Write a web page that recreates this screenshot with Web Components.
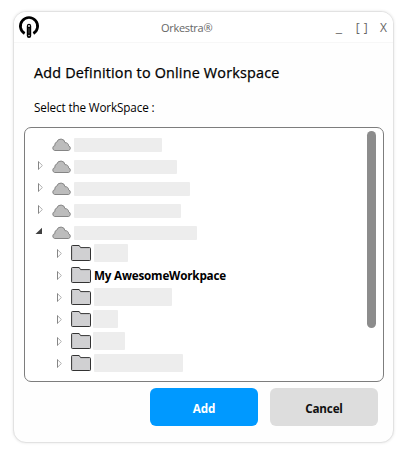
<!DOCTYPE html>
<html lang="en">
<head>
<meta charset="utf-8">
<title>Orkestra</title>
<style>
html,body{margin:0;background:#fff}
body{width:409px;height:456px;overflow:hidden;font-family:"Open Sans","Noto Sans",sans-serif;color:#000;font-size:12px}
</style>
</head>
<body>
<ork-window>
  <ork-titlebar slot="bar">Orkestra®</ork-titlebar>
  <ork-tree>
    <ork-row kind="cloud" arrow="none" bar="88"></ork-row>
    <ork-row kind="cloud" bar="103"></ork-row>
    <ork-row kind="cloud" bar="116"></ork-row>
    <ork-row kind="cloud" bar="107"></ork-row>
    <ork-row kind="cloud" arrow="open" bar="123"></ork-row>
    <ork-row kind="folder" bar="34"></ork-row>
    <ork-row kind="folder">My AwesomeWorkpace</ork-row>
    <ork-row kind="folder" bar="78"></ork-row>
    <ork-row kind="folder" bar="25" wide></ork-row>
    <ork-row kind="folder" bar="32" wide></ork-row>
    <ork-row kind="folder" bar="89"></ork-row>
  </ork-tree>
  <ork-button slot="actions" primary>Add</ork-button>
  <ork-button slot="actions">Cancel</ork-button>
</ork-window>
<script>
const define = (name, html) => customElements.define(name, class extends HTMLElement {
  constructor() {
    super();
    this.attachShadow({mode: 'open'}).innerHTML = html;
  }
});

define('ork-window', `<style>
:host{display:flow-root}
section{box-sizing:border-box;width:381px;height:432px;margin:11px 0 0 13px;border:1px solid #e2e2e2;border-radius:13px;box-shadow:0 0 3px #0000001c;background:#fefefe;display:flex;flex-direction:column;overflow:hidden}
h1{margin:20px 0 0 20px;font-size:14.4px;line-height:20px;font-weight:500;letter-spacing:.18px;white-space:nowrap;-webkit-text-stroke:.25px #000}
p{margin:16px 0 0 20px;font-size:11.7px;line-height:16px;letter-spacing:-.13px}
.list{margin:12px 0 0 10px}
footer{display:flex;gap:12px;margin:6px 0 0 136px}
</style>
<section><slot name="bar"></slot><h1>Add Definition to Online Workspace</h1><p>Select the WorkSpace :</p>
<div class="list"><slot></slot></div><footer><slot name="actions"></slot></footer></section>`);

define('ork-titlebar', `<style>
:host{display:block}
header{box-sizing:border-box;height:31px;border-bottom:1px solid #f7f7f7;background:#fff;display:grid;grid-template-columns:147px 1fr auto;color:#666;font-size:11px;line-height:32px}
svg{display:block;margin:3px 0 0 3px}
.title{letter-spacing:-.3px}
nav{display:flex;font-size:12px;margin-right:5px}
nav span{display:block;text-align:center;white-space:nowrap}
.min{width:10px;margin-right:8px;transform:scaleX(1.2)}.max{width:20px;margin-right:7px;letter-spacing:.5px}.close{width:9px}
</style>
<header><svg width="24" height="25" viewBox="0 0 24 25" fill="none"><path d="M7.6 18.5A8.6 8.6 0 1 1 16.4 18.5" stroke="#000" stroke-width="2.7"/><path d="M12 11V20.8" stroke="#000" stroke-width="4.4" stroke-linecap="round"/><path d="M12 13.2V18.5" stroke="#777" stroke-width=".7"/><circle cx="12" cy="11" r=".9" fill="#fff"/><circle cx="12" cy="20.5" r=".8" fill="#ccc"/></svg>
<span class="title"><slot></slot></span><nav><span class="min">_</span><span class="max">[ ]</span><span class="close">X</span></nav></header>`);

define('ork-tree', `<style>
:host{box-sizing:border-box;width:360px;height:255px;border:1px solid #7d7d7d;border-radius:7px;display:flex;justify-content:space-between;background:#fff}
.rows{padding-top:6px}
.thumb{width:9px;height:197px;margin:3px 7px 0 0;border-radius:5px;background:#8c8c8c}
</style>
<div class="rows"><slot></slot></div><div class="thumb"></div>`);

customElements.define('ork-row', class extends HTMLElement {
  constructor() {
    super();
    const folder = this.getAttribute('kind') === 'folder';
    const arrow = this.getAttribute('arrow') || 'closed';
    const bar = this.getAttribute('bar');
    const wide = this.hasAttribute('wide');
    const glyph = {
      none: '',
      closed: '<path d="M.5.7V8.3L4.4 4.5Z" fill="#fff" stroke="#b0b0b0"/><path d="M.5.5V8.5" stroke="#858585"/>',
      open: '<path d="M7 .7V7H.5Z" fill="#404040"/>'
    }[arrow];
    const icon = folder
      ? '<svg class="icon" width="20" height="18" viewBox="0 0 20 18"><path d="M.6 15.8V2.2Q.6 1.5 1.4 1.5H8.2L9.6 3.6H18.6Q19.5 3.6 19.5 4.5V15.8Q19.5 16.5 18.7 16.5H1.4Q.6 16.5.6 15.8Z" fill="#d0d0d2" stroke="#333"/></svg>'
      : '<svg class="icon" width="20" height="14" viewBox=".3 0 20 14"><path d="M3 12.5A2.5 2.5 0 0 1 3.2 7.6A2.9 2.9 0 0 1 5.1 4.1A4.2 4.2 0 0 1 13.3 4.7A3.1 3.1 0 0 1 16.9 7.9A2.4 2.4 0 0 1 16.9 12.5Z" fill="#bcbcbc" stroke="#858585"/></svg>';
    this.attachShadow({mode: 'open'}).innerHTML = `<style>
:host{display:flex;align-items:flex-start;height:22px;box-sizing:border-box}
.arrow{flex:none;width:8px;height:9px;margin:${folder ? '5px 6px 0 32px' : arrow === 'open' ? '5px 9px 0 10px' : '5px 6px 0 13px'}}
.icon{flex:none;margin-top:${folder ? 0 : 4}px}
.bar{width:${bar || 0}px;height:${folder ? 18 : 14}px;margin:${folder ? 0 : 4}px 0 0 ${folder ? (wide ? 2 : 3) : 2}px;background:#ededed;border-radius:1px}
b{font-weight:700;font-size:11.7px;line-height:18px;margin:0 0 0 3px;letter-spacing:-.2px;white-space:nowrap}
</style><svg class="arrow" viewBox="0 0 8 9">${glyph}</svg>${icon}${bar ? '<div class="bar"></div>' : '<b><slot></slot></b>'}`;
  }
});

define('ork-button', `<style>
button{display:block;width:108px;height:38px;padding:0;border:0;border-radius:6px;background:#ddd;color:#111;font:700 11.7px/38px "Open Sans","Noto Sans",sans-serif;letter-spacing:-.2px}
span{display:block;padding-top:1px;line-height:38px}
:host([primary]) button{background:#0099ff;color:#fff}
</style><button><span><slot></slot></span></button>`);
</script>
</body>
</html>
